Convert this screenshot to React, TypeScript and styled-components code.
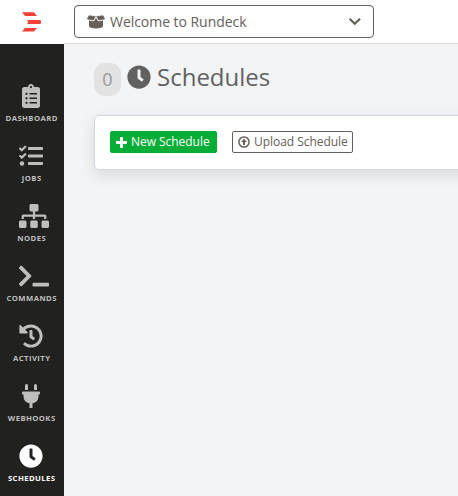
import React from 'react';
import styled, { createGlobalStyle } from 'styled-components';
import {
  FaClipboardList, FaTasks, FaSitemap, FaTerminal, FaHistory, FaPlug, FaClock,
} from 'react-icons/fa';

const Global = createGlobalStyle`
  * { box-sizing: border-box; }
  body { margin: 0; background: #f3f4f6; font-family: "Open Sans", "Noto Sans", sans-serif; overflow: hidden; }
  svg { display: block; flex: none; }
`;
const Page = styled.div`
  height: 496px;
  display: grid;
  grid-template-rows: 44px 1fr;
`;
const TopBar = styled.header`
  display: flex;
  background: #fff;
`;
const LogoBox = styled.div`
  width: 64px;
  padding: 12px 0 0 22px;
`;
const ProjectArea = styled.div`
  flex: 1;
  padding: 5px 0 0 10px;
`;
const ProjectPicker = styled.button`
  width: 300px;
  height: 33px;
  display: flex;
  align-items: center;
  padding: 0 12px;
  border: 1px solid #65605a;
  border-radius: 4px;
  background: #fff;
  color: #65605a;
  font: 400 14px/20px "Open Sans", sans-serif;
`;
const ProjectName = styled.span`
  margin-left: 5px;
  flex: 1;
  text-align: left;
  letter-spacing: -0.04px;
`;
const Body = styled.div`
  display: flex;
  min-height: 0;
`;
const Sidebar = styled.nav`
  flex: none;
  width: 64px;
  background: #212120;
  padding-top: 36px;
`;
const NavItem = styled.a<{ $active?: boolean }>`
  height: 60px;
  display: flex;
  flex-direction: column;
  align-items: center;
  padding-right: 1px;
  color: ${p => (p.$active ? '#fff' : '#bebebd')};
`;
const NavIcon = styled.span<{ $wide?: boolean }>`
  height: 32px;
  display: flex;
  align-items: center;
  margin-left: ${p => (p.$wide ? 5 : -1)}px;
  svg {
    width: ${p => (p.$wide ? 30 : 24)}px;
    height: 24px;
  }
`;
const NavLabel = styled.span`
  font-size: 7.7px;
  line-height: 12px;
  font-weight: 700;
  letter-spacing: 0.42px;
  margin-right: -0.4px;
  white-space: nowrap;
`;
const Main = styled.main`
  flex: 1;
  min-width: 0;
  overflow: hidden;
  border-top: 1px solid #dcdddf;
  margin-top: -1px;
  padding: 19px 0 0 30px;
`;
const Heading = styled.div`
  display: flex;
  align-items: flex-start;
  height: 34px;
  color: #616161;
`;
const Count = styled.span`
  width: 27px;
  height: 33px;
  border-radius: 11px;
  background: #e2e2e2;
  color: #999;
  font-size: 18px;
  font-weight: 500;
  line-height: 33px;
  text-align: center;
  margin-right: 6px;
`;
const ClockBox = styled.span`
  padding-top: 2px;
`;
const Title = styled.h1`
  margin: -3px 0 0 6px;
  font-size: 24px;
  line-height: 33px;
  font-weight: 400;
`;
const Card = styled.section`
  margin: 18px -24px 0 0;
  height: 55px;
  display: flex;
  gap: 15px;
  padding: 15px;
  border: 1px solid #cfd8e3;
  border-radius: 5px;
  background: #fff;
  box-shadow: 0 5px 15px rgba(40, 45, 55, 0.13);
`;
const Action = styled.button<{ $primary?: boolean; $width: number }>`
  width: ${p => p.$width}px;
  height: 22px;
  display: flex;
  align-items: center;
  gap: 4px;
  padding: 0 0 0 5px;
  border: 1px solid ${p => (p.$primary ? '#06ad37' : '#65605a')};
  border-radius: 2px;
  background: ${p => (p.$primary ? '#06ad37' : '#fff')};
  color: ${p => (p.$primary ? '#fff' : '#65605a')};
  font: 500 12px/18px "Open Sans", sans-serif;
  letter-spacing: -0.04px;
  white-space: nowrap;
`;

const nav = [
  { label: 'DASHBOARD', icon: <FaClipboardList /> },
  { label: 'JOBS', icon: <FaTasks /> },
  { label: 'NODES', icon: <FaSitemap />, wide: true },
  { label: 'COMMANDS', icon: <FaTerminal />, wide: true },
  { label: 'ACTIVITY', icon: <FaHistory /> },
  { label: 'WEBHOOKS', icon: <FaPlug /> },
  { label: 'SCHEDULES', icon: <FaClock />, active: true },
];

export default function App() {
  return (
    <Page>
      <Global />
      <TopBar>
        <LogoBox>
          <svg width="20" height="20" viewBox="0 0 20 20" fill="#f73f39">
            <path d="M0 .3H12L15 4H3ZM5 8H18L19 8.7V11.3L18 12H5L6.2 10ZM3 16H15L12 19.6H0Z" />
          </svg>
        </LogoBox>
        <ProjectArea>
          <ProjectPicker>
            <svg width="18" height="14" viewBox="0 0 18 14" fill="currentColor">
              <path d="M2 .7L8.3 1.5L6.3 5L.4 3.9ZM16 .7L9.7 1.5L11.7 5L17.6 3.9Z" stroke="currentColor" strokeWidth=".7" strokeLinejoin="round" />
              <path d="M2 5.5L6.8 6.3L9 3L11.2 6.3L16 5.5V10.7Q16 12 14.8 12.5Q9 14.4 3.2 12.5Q2 12 2 10.7Z" />
            </svg>
            <ProjectName>Welcome to Rundeck</ProjectName>
            <svg width="12" height="9" viewBox="1 0 12 9" fill="none" stroke="currentColor" strokeWidth="2.2">
              <path d="M1.6 1.8L6.8 6.8L12 1.8" />
            </svg>
          </ProjectPicker>
        </ProjectArea>
      </TopBar>
      <Body>
        <Sidebar>
          {nav.map(n => (
            <NavItem key={n.label} $active={n.active}>
              <NavIcon $wide={n.wide}>{n.icon}</NavIcon>
              <NavLabel>{n.label}</NavLabel>
            </NavItem>
          ))}
        </Sidebar>
        <Main>
          <Heading>
            <Count>0</Count>
            <ClockBox><FaClock size={24} /></ClockBox>
            <Title>Schedules</Title>
          </Heading>
          <Card>
            <Action $primary $width={107}>
              <svg width="11" height="11" viewBox="0 0 11 11" fill="none" stroke="currentColor" strokeWidth="3">
                <path d="M0 5.5H11M5.5 0V11" />
              </svg>
              New Schedule
            </Action>
            <Action $width={121}>
              <svg width="12" height="12" viewBox="0 0 12 12" fill="none" stroke="currentColor" strokeWidth="1.5">
                <circle cx="6" cy="6" r="5.1" />
                <path d="M6 9V4" strokeWidth="2" />
                <path d="M3 6L6 2.7L9 6Z" fill="currentColor" stroke="none" />
              </svg>
              Upload Schedule
            </Action>
          </Card>
        </Main>
      </Body>
    </Page>
  );
}
